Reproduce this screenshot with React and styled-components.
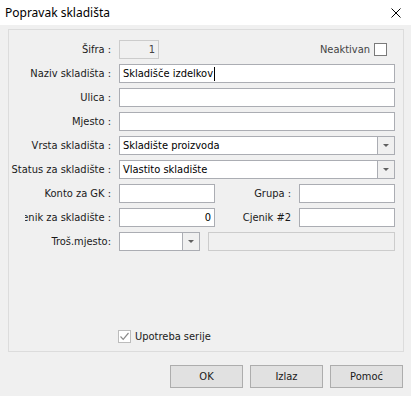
import React from "react";
import styled, { createGlobalStyle } from "styled-components";

const GlobalStyle = createGlobalStyle`
  html, body {
    margin: 0;
    padding: 0;
    background: #f0f0f0;
  }
  body {
    font-family: "DejaVu Sans Condensed", Tahoma, "DejaVu Sans", sans-serif;
    font-size: 11px;
    color: #000;
  }
`;

const Window = styled.div`
  width: 411px;
  height: 396px;
  background: #f0f0f0;
  display: flex;
  flex-direction: column;
  overflow: hidden;
`;

const TitleBar = styled.div`
  height: 25px;
  flex-shrink: 0;
  background: #fff;
  display: flex;
  align-items: center;
  justify-content: space-between;
  padding: 0 10px 0 5px;
  box-sizing: border-box;
  font-family: "Noto Sans", "Open Sans", sans-serif;
  font-size: 12px;
  color: #000;
`;

const Body = styled.div`
  padding: 4px 7px 0 8px;
  display: flex;
  flex-direction: column;
`;

const GroupBox = styled.div`
  height: 323px;
  box-sizing: border-box;
  border: 1px solid #dcdcdc;
  padding: 10px 8px 8px 0;
  display: flex;
  flex-direction: column;
  gap: 5px;
`;

const Row = styled.div`
  display: flex;
  align-items: center;
  height: 19px;
`;

// $clip: label box is narrower and cuts its text off on the left
const Label = styled.div`
  width: ${(p) => (p.$clip ? "86px" : "102px")};
  margin-left: ${(p) => (p.$clip ? "16px" : "0")};
  margin-right: 8px;
  flex-shrink: 0;
  display: flex;
  justify-content: flex-end;
  overflow: hidden;
  white-space: nowrap;
  color: #1a1a1a;
  span {
    flex-shrink: 0;
  }
`;

const SideLabel = styled.div`
  flex: 1;
  text-align: right;
  margin-right: 8px;
  white-space: nowrap;
  color: #1a1a1a;
`;

const Field = styled.div`
  height: 19px;
  box-sizing: border-box;
  border: 1px solid ${(p) => (p.$disabled ? "#cccccc" : "#abadb3")};
  background: ${(p) => (p.$disabled ? "#f0f0f0" : "#fff")};
  color: ${(p) => (p.$disabled ? "#444" : "#000")};
  width: ${(p) => (p.$w ? `${p.$w}px` : "auto")};
  flex: ${(p) => (p.$w ? "0 0 auto" : "1")};
  display: flex;
  align-items: center;
  justify-content: ${(p) => (p.$right ? "flex-end" : "flex-start")};
  padding: 0 3px;
  white-space: nowrap;
  overflow: hidden;
`;

const Caret = styled.span`
  display: inline-block;
  width: 1px;
  height: 14px;
  background: #000;
  margin-left: 1px;
`;

const Combo = styled.div`
  height: 19px;
  box-sizing: border-box;
  border: 1px solid #abadb3;
  background: #fff;
  width: ${(p) => (p.$w ? `${p.$w}px` : "auto")};
  flex: ${(p) => (p.$w ? "0 0 auto" : "1")};
  display: flex;
  align-items: stretch;
`;

const ComboText = styled.div`
  flex: 1;
  display: flex;
  align-items: center;
  padding: 0 3px;
  white-space: nowrap;
  overflow: hidden;
`;

const ComboArrow = styled.div`
  width: 16px;
  border-left: 1px solid #abadb3;
  background: #f0f0f0;
  display: flex;
  align-items: center;
  justify-content: center;
  &::after {
    content: "";
    border-left: 3px solid transparent;
    border-right: 3px solid transparent;
    border-top: 3px solid #606060;
  }
`;

const Spacer = styled.div`
  flex: ${(p) => (p.$w ? `0 0 ${p.$w}px` : "1")};
`;

const CheckLabel = styled.label`
  display: flex;
  align-items: center;
  gap: 4px;
  margin-right: ${(p) => (p.$muted ? "8px" : "0")};
  color: ${(p) => (p.$muted ? "#444" : "#1a1a1a")};
  white-space: nowrap;
`;

const Box = styled.span`
  width: 13px;
  height: 13px;
  box-sizing: border-box;
  border: 1px solid ${(p) => (p.$checked ? "#bcbcbc" : "#7a7a7a")};
  background: #fff;
  display: flex;
  align-items: center;
  justify-content: center;
`;

const BottomRow = styled.div`
  margin-top: auto;
  padding-left: 109px;
  display: flex;
`;

const Buttons = styled.div`
  display: flex;
  justify-content: flex-end;
  gap: 7px;
  margin-top: 13px;
  padding-right: 1px;
`;

const Button = styled.button`
  width: 73px;
  height: 23px;
  box-sizing: border-box;
  border: 1px solid #adadad;
  background: #e1e1e1;
  font-family: inherit;
  font-size: 11px;
  color: #1a1a1a;
  padding: 0;
`;

const CloseIcon = () => (
  <svg width="10" height="10" viewBox="0 0 10 10">
    <path d="M0.5 0.5 L9.5 9.5 M9.5 0.5 L0.5 9.5" stroke="#000" strokeWidth="1" />
  </svg>
);

const Check = () => (
  <svg width="11" height="11" viewBox="0 0 11 11">
    <path d="M1.5 5.5 L4.2 8.3 L9.5 2" fill="none" stroke="#8a8a8a" strokeWidth="1.2" />
  </svg>
);

const App = () => {
  return (
    <Window>
      <GlobalStyle />
      <TitleBar>
        <span>Popravak skladišta</span>
        <CloseIcon />
      </TitleBar>
      <Body>
        <GroupBox>
          <Row>
            <Label><span>Šifra :</span></Label>
            <Field $w={40} $disabled $right>1</Field>
            <Spacer />
            <CheckLabel $muted>
              Neaktivan
              <Box />
            </CheckLabel>
          </Row>
          <Row>
            <Label><span>Naziv skladišta :</span></Label>
            <Field>
              Skladišče izdelkov
              <Caret />
            </Field>
          </Row>
          <Row>
            <Label><span>Ulica :</span></Label>
            <Field />
          </Row>
          <Row>
            <Label><span>Mjesto :</span></Label>
            <Field />
          </Row>
          <Row>
            <Label><span>Vrsta skladišta :</span></Label>
            <Combo>
              <ComboText>Skladište proizvoda</ComboText>
              <ComboArrow />
            </Combo>
          </Row>
          <Row>
            <Label><span>Status za skladište :</span></Label>
            <Combo>
              <ComboText>Vlastito skladište</ComboText>
              <ComboArrow />
            </Combo>
          </Row>
          <Row>
            <Label><span>Konto za GK :</span></Label>
            <Field $w={96} />
            <SideLabel>Grupa :</SideLabel>
            <Field $w={96} />
          </Row>
          <Row>
            <Label $clip><span>Cjenik za skladište :</span></Label>
            <Field $w={96} $right>0</Field>
            <SideLabel>Cjenik #2</SideLabel>
            <Field $w={96} />
          </Row>
          <Row>
            <Label><span>Troš.mjesto:</span></Label>
            <Combo $w={81}>
              <ComboText />
              <ComboArrow />
            </Combo>
            <Spacer $w={8} />
            <Field $disabled />
          </Row>
          <BottomRow>
            <CheckLabel>
              <Box $checked>
                <Check />
              </Box>
              Upotreba serije
            </CheckLabel>
          </BottomRow>
        </GroupBox>
        <Buttons>
          <Button>OK</Button>
          <Button>Izlaz</Button>
          <Button>Pomoć</Button>
        </Buttons>
      </Body>
    </Window>
  );
};

export default App;
